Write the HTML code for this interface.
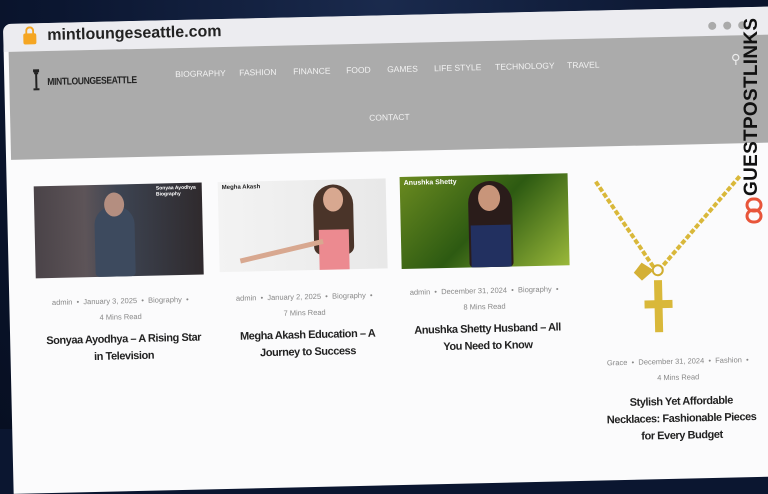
<!DOCTYPE html>
<html><head><meta charset="utf-8"><style>
*{margin:0;padding:0;box-sizing:border-box}
html,body{width:768px;height:429px;overflow:hidden;background:#0b1630;font-family:"Liberation Sans",sans-serif}
.bg{position:absolute;inset:0;background:radial-gradient(ellipse at 50% 0%,#1a2a4d 0%,#0b1630 60%,#070f22 100%)}
.win{position:absolute;left:3px;top:24px;width:800px;height:470px;background:#fbfbfc;transform:rotate(-1.3deg);transform-origin:0 0;border-radius:8px 8px 0 0;overflow:hidden}
.bar{position:absolute;left:0;top:0;width:100%;height:28px;background:#ececf0}
.url{position:absolute;left:44px;top:4px;font-size:16px;font-weight:bold;color:#222}
.lock{position:absolute;left:20px;top:10px;width:13px;height:11px;background:#f5a623;border-radius:2px}
.lock:before{content:"";position:absolute;left:2px;top:-7px;width:5px;height:7px;border:2px solid #f5a623;border-bottom:none;border-radius:5px 5px 0 0}
.dots{position:absolute;left:705px;top:9px}
.dots i{display:inline-block;width:8px;height:8px;border-radius:50%;background:#aaa;margin-right:7px}
.nav{position:absolute;left:5px;top:28px;width:790px;height:108px;background:#ababab}
.nav span{position:absolute;color:#f2f2f2;font-size:8.5px}
.logo{position:absolute;left:38px;top:26px;color:#222;font-size:10px;font-weight:bold;letter-spacing:-.4px;transform:scaleX(.85);transform-origin:0 0}
.tower{position:absolute;left:22px;top:16px;width:10px;height:24px}
.img{position:absolute}
.meta{position:absolute;font-size:7.5px;color:#888;text-align:center;width:170px;line-height:16px}
.t{position:absolute;font-size:11px;font-weight:bold;color:#222;text-align:center;line-height:17px;letter-spacing:-.45px}
.gp{position:absolute;left:741px;top:196px;transform:rotate(-90deg);transform-origin:0 0;font-weight:900;font-size:19px;color:#111;letter-spacing:.3px;white-space:nowrap}
</style></head><body>
<div class="bg"></div>
<div class="win">
 <div class="bar"><div class="lock"></div><div class="url">mintloungeseattle.com</div><div class="dots"><i></i><i></i><i></i></div></div>
 <div class="nav">
  <svg class="tower" viewBox="0 0 10 24"><path d="M2 2h6v3H2z M3 5h4v2H3z M4 7h2v14H4z M2 21h6v2H2z" fill="#222"/></svg>
  <div class="logo">MINTLOUNGESEATTLE</div>
  <span style="left:166px;top:21px">BIOGRAPHY</span>
  <span style="left:230px;top:21px">FASHION</span>
  <span style="left:284px;top:21px">FINANCE</span>
  <span style="left:337px;top:21px">FOOD</span>
  <span style="left:378px;top:21px">GAMES</span>
  <span style="left:425px;top:21px">LIFE STYLE</span>
  <span style="left:486px;top:21px">TECHNOLOGY</span>
  <span style="left:558px;top:21px">TRAVEL</span>
  <span style="left:359px;top:69px">CONTACT</span>
  <span style="left:722px;top:16px;font-size:13px;color:#eee">&#9906;</span>
 </div>
 <div class="img" style="left:27px;top:163px;width:168px;height:92px;background:linear-gradient(90deg,#4a4348 0%,#5d5458 30%,#3d4452 50%,#2f2a2d 100%)">
  <div style="position:absolute;left:60px;top:22px;width:40px;height:70px;background:#3d4a5e;border-radius:18px 18px 4px 4px"></div>
  <div style="position:absolute;left:70px;top:8px;width:20px;height:24px;background:#b48e80;border-radius:50%"></div>
  <div style="position:absolute;right:6px;top:2px;font-size:5px;color:#fff;font-weight:bold">Sonyaa Ayodhya<br>Biography</div></div>
 <div class="img" style="left:211px;top:163px;width:168px;height:90px;background:linear-gradient(90deg,#f3f3f3,#e8e8e8)">
  <div style="position:absolute;left:95px;top:5px;width:40px;height:70px;background:#4a3429;border-radius:20px 20px 8px 8px"></div>
  <div style="position:absolute;left:105px;top:8px;width:20px;height:24px;background:#d8a890;border-radius:50%"></div>
  <div style="position:absolute;left:100px;top:50px;width:30px;height:40px;background:#ec8a90"></div>
  <div style="position:absolute;left:20px;top:68px;width:85px;height:5px;background:#d8a890;transform:rotate(-12deg)"></div>
  <div style="position:absolute;left:4px;top:3px;font-size:6px;color:#222;font-weight:bold">Megha Akash</div></div>
 <div class="img" style="left:393px;top:162px;width:168px;height:92px;background:linear-gradient(135deg,#6a8a20,#2d5a12 50%,#9ab83a)">
  <div style="position:absolute;left:68px;top:6px;width:44px;height:86px;background:#2a1c1a;border-radius:22px 22px 4px 4px"></div>
  <div style="position:absolute;left:78px;top:10px;width:22px;height:26px;background:#c8957a;border-radius:50%"></div>
  <div style="position:absolute;left:70px;top:50px;width:40px;height:42px;background:#223060"></div>
  <div style="position:absolute;left:4px;top:3px;font-size:7px;color:#fff;font-weight:bold">Anushka Shetty</div></div>
 <svg class="img" style="left:583px;top:163px" width="170" height="165" viewBox="0 0 170 165">
  <g stroke="#d9b83a" stroke-width="4" fill="none" stroke-dasharray="5 2"><path d="M6 8 L62 95"/><path d="M150 6 L70 95"/></g>
  <circle cx="66" cy="98" r="5" stroke="#d0ad30" stroke-width="2" fill="none"/>
  <path d="M50 90 L62 98 L50 108 L42 100Z" fill="#d4b035"/>
  <path d="M62 108 h8 v20 h10 v8 h-10 v24 h-8 v-24 h-10 v-8 h10z" fill="#d9b83a"/>
 </svg>
 <div class="meta" style="left:26px;top:272px">admin &nbsp;•&nbsp; January 3, 2025 &nbsp;•&nbsp; Biography &nbsp;•<br>4 Mins Read</div>
 <div class="meta" style="left:210px;top:272px">admin &nbsp;•&nbsp; January 2, 2025 &nbsp;•&nbsp; Biography &nbsp;•<br>7 Mins Read</div>
 <div class="meta" style="left:390px;top:270px">admin &nbsp;•&nbsp; December 31, 2024 &nbsp;•&nbsp; Biography &nbsp;•<br>8 Mins Read</div>
 <div class="meta" style="left:582px;top:345px">Grace &nbsp;•&nbsp; December 31, 2024 &nbsp;•&nbsp; Fashion &nbsp;•<br>4 Mins Read</div>
 <div class="t" style="left:26px;top:310px;width:175px">Sonyaa Ayodhya – A Rising Star<br>in Television</div>
 <div class="t" style="left:210px;top:310px;width:175px">Megha Akash Education – A<br>Journey to Success</div>
 <div class="t" style="left:390px;top:308px;width:175px">Anushka Shetty Husband – All<br>You Need to Know</div>
 <div class="t" style="left:582px;top:385px;width:175px">Stylish Yet Affordable<br>Necklaces: Fashionable Pieces<br>for Every Budget</div>
</div>
<div class="gp">GUESTPOSTLINKS</div>
<svg style="position:absolute;left:745px;top:197px" width="20" height="28" viewBox="0 0 20 28"><g fill="none" stroke="#e8553a" stroke-width="3"><rect x="2" y="2" width="14" height="12" rx="6"/><rect x="2" y="13" width="14" height="12" rx="6"/></g></svg>
</body></html>
